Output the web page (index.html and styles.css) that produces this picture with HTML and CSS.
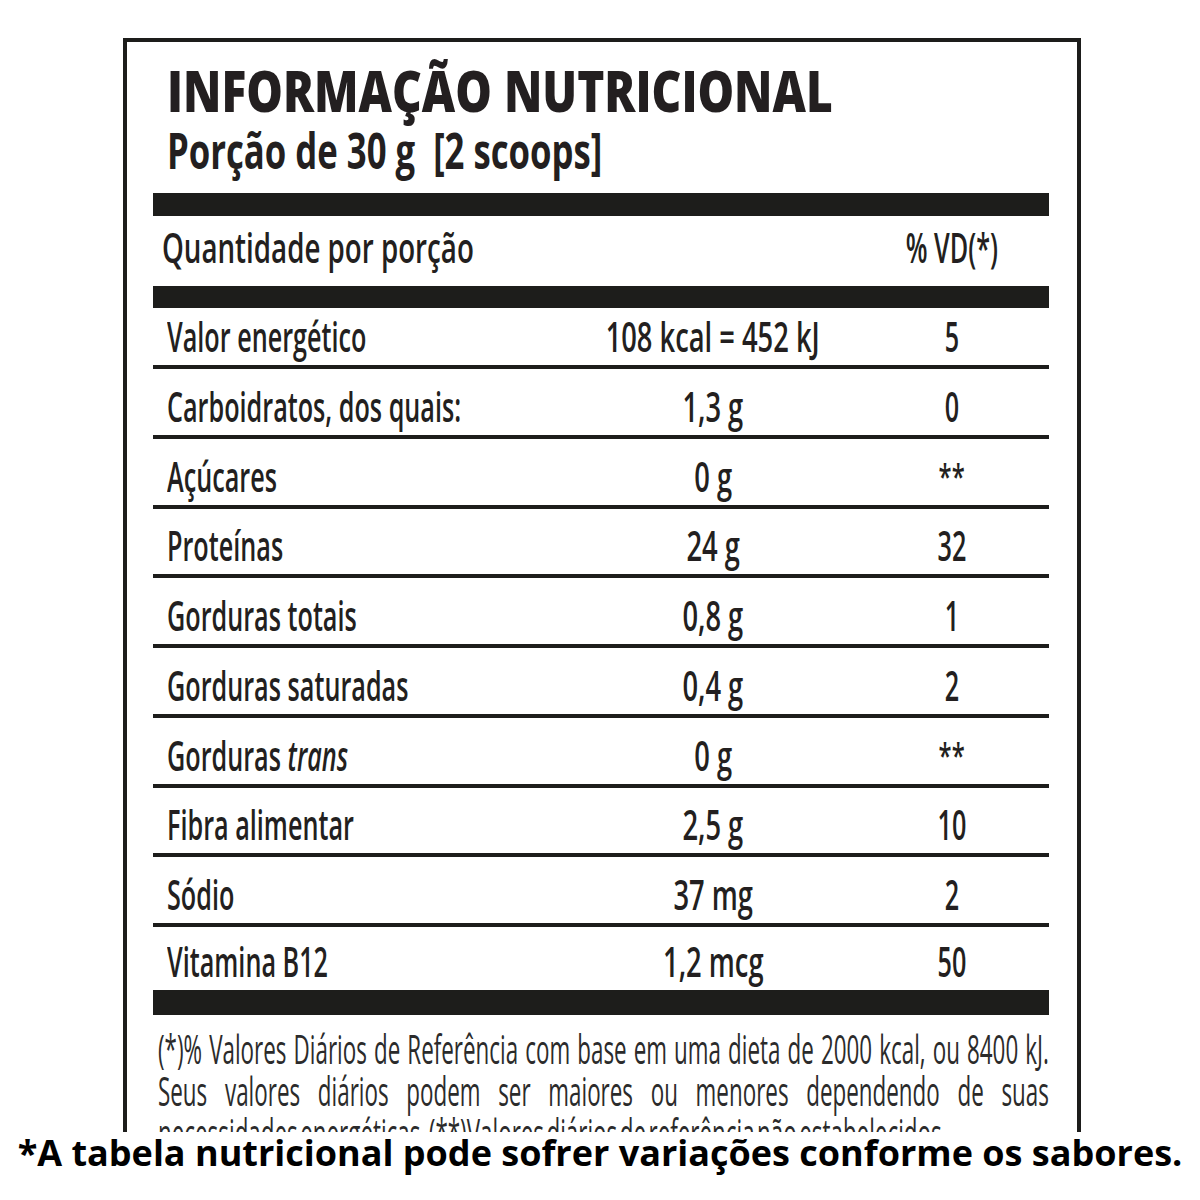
FILE: index.html
```html
<!DOCTYPE html>
<html lang="pt-BR">
<head>
<meta charset="utf-8">
<title>Informação Nutricional</title>
<link rel="stylesheet" href="styles.css">
</head>
<body>
<div class="page">
  <div class="clip">
    <div class="label">
      <header class="head">
        <h1 class="title"><span class="sx">INFORMAÇÃO NUTRICIONAL</span></h1>
        <p class="serving"><span class="sx">Porção de 30 g&nbsp; [2 scoops]</span></p>
      </header>
      <div class="bar bar1"></div>
      <div class="row row-head">
        <div class="c1"><span class="sx">Quantidade por porção</span></div>
        <div class="c2"></div>
        <div class="c3"><span class="sx">% VD(*)</span></div>
      </div>
      <div class="bar bar2"></div>
      <div class="row first">
        <div class="c1"><span class="sx">Valor energético</span></div>
        <div class="c2"><span class="sx">108 kcal = 452 kJ</span></div>
        <div class="c3"><span class="sx">5</span></div>
      </div>
      <div class="row">
        <div class="c1"><span class="sx">Carboidratos, dos quais:</span></div>
        <div class="c2"><span class="sx">1,3 g</span></div>
        <div class="c3"><span class="sx">0</span></div>
      </div>
      <div class="row">
        <div class="c1"><span class="sx">Açúcares</span></div>
        <div class="c2"><span class="sx">0 g</span></div>
        <div class="c3"><span class="sx ast">**</span></div>
      </div>
      <div class="row">
        <div class="c1"><span class="sx">Proteínas</span></div>
        <div class="c2"><span class="sx">24 g</span></div>
        <div class="c3"><span class="sx">32</span></div>
      </div>
      <div class="row">
        <div class="c1"><span class="sx">Gorduras totais</span></div>
        <div class="c2"><span class="sx">0,8 g</span></div>
        <div class="c3"><span class="sx">1</span></div>
      </div>
      <div class="row">
        <div class="c1"><span class="sx">Gorduras saturadas</span></div>
        <div class="c2"><span class="sx">0,4 g</span></div>
        <div class="c3"><span class="sx">2</span></div>
      </div>
      <div class="row">
        <div class="c1"><span class="sx">Gorduras <i>trans</i></span></div>
        <div class="c2"><span class="sx">0 g</span></div>
        <div class="c3"><span class="sx ast">**</span></div>
      </div>
      <div class="row">
        <div class="c1"><span class="sx">Fibra alimentar</span></div>
        <div class="c2"><span class="sx">2,5 g</span></div>
        <div class="c3"><span class="sx">10</span></div>
      </div>
      <div class="row">
        <div class="c1"><span class="sx">Sódio</span></div>
        <div class="c2"><span class="sx">37 mg</span></div>
        <div class="c3"><span class="sx">2</span></div>
      </div>
      <div class="row last">
        <div class="c1"><span class="sx">Vitamina B12</span></div>
        <div class="c2"><span class="sx">1,2 mcg</span></div>
        <div class="c3"><span class="sx">50</span></div>
      </div>
      <div class="bar bar3"></div>
      <div class="notes">
        <div class="notes-inner">
          <div class="nl full">(*)% Valores Diários de Referência com base em uma dieta de 2000 kcal, ou 8400 kJ.</div>
          <div class="nl full">Seus valores diários podem ser maiores ou menores dependendo de suas</div>
          <div class="nl">necessidades energéticas. (**)Valores diários de referência não estabelecidos.</div>
        </div>
      </div>
    </div>
  </div>
  <p class="caption">*A tabela nutricional pode sofrer variações conforme os sabores.</p>
</div>
</body>
</html>
```

FILE: styles.css
```css
* { box-sizing: border-box; }

html, body {
  margin: 0;
  padding: 0;
  background: #ffffff;
}

.page {
  width: 1200px;
  height: 1200px;
  background: #ffffff;
  overflow: hidden;
  font-family: "Open Sans", "Noto Sans", sans-serif;
  color: #231f20;
}

.clip {
  height: 1132px;
  overflow: hidden;
  padding: 38px 0 0 123px;
}

.label {
  width: 958px;
  min-height: 1200px;
  border: 4px solid #1d1d1b;
  border-bottom: none;
  padding: 0 28px 0 26px;
}

.sx {
  display: inline-block;
  white-space: nowrap;
  transform-origin: left center;
}

.head {
  padding: 20px 0 18px 14px;
}

.title {
  margin: 0;
  font-size: 56px;
  line-height: 56px;
  font-weight: 800;
  height: 56px;
}

.title .sx {
  transform: scaleX(0.822);
}

.serving {
  margin: 7px 0 0 0;
  font-size: 50px;
  line-height: 50px;
  font-weight: 700;
  height: 50px;
}

.serving .sx {
  transform: scaleX(0.694);
}

.bar {
  background: #1d1d1b;
}

.bar1 { height: 23px; }
.bar2 { height: 22px; }
.bar3 { height: 25px; }

.row {
  display: grid;
  grid-template-columns: 380px 360px 118px;
  align-items: end;
  height: 69.75px;
  border-bottom: 4px solid #1d1d1b;
  padding-bottom: 8px;
  font-size: 42px;
  line-height: 42px;
  font-weight: 600;
}

.row.first { height: 61px; }

.row.last {
  height: 63px;
  border-bottom: none;
}

.row.row-head {
  height: 70px;
  border-bottom: none;
  padding-bottom: 18px;
}

.c1 {
  padding-left: 14px;
  height: 42px;
}

.row-head .c1 { padding-left: 9px; }

.c2, .c3 {
  display: flex;
  justify-content: center;
  height: 42px;
}

.row .sx {
  transform: scaleX(0.6);
}

.row-head .c1 .sx {
  transform: scaleX(0.66);
}

.row .c2 .sx {
  transform: scaleX(0.65);
}

.c2 .sx, .c3 .sx {
  transform-origin: center center;
}

.row .ast {
  font-size: 34px;
  transform: scaleX(0.7);
}

.row i {
  font-style: italic;
}

.notes {
  width: 891px;
  margin-left: 5px;
  padding-top: 13px;
  overflow: hidden;
}

.notes-inner {
  width: 1591px;
  transform: scaleX(0.56);
  transform-origin: left top;
  font-size: 40px;
  line-height: 42px;
  font-weight: 400;
  word-spacing: -6px;
  color: #2b2b2b;
}

.nl {
  white-space: nowrap;
}

.nl.full {
  text-align: justify;
  text-align-last: justify;
}

.caption {
  margin: 1px 0 0 0;
  text-align: center;
  font-size: 36px;
  line-height: 40px;
  font-weight: 700;
  color: #000000;
}
```
